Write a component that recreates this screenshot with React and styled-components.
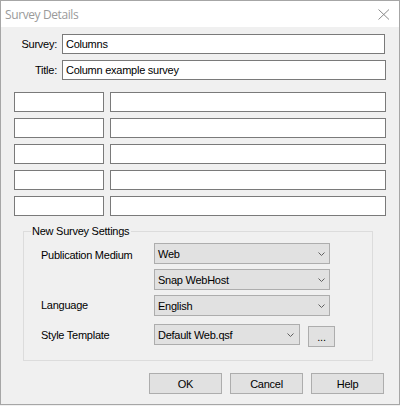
import React from "react";
import styled, { createGlobalStyle } from "styled-components";

const Global = createGlobalStyle`
  html, body { margin: 0; padding: 0; background: #f0f0f0; }
  *, *::before, *::after { box-sizing: border-box; }
`;

const uiFont = `
  font-family: "Liberation Sans", Arial, sans-serif;
  font-size: 11px;
  letter-spacing: -0.25px;
  color: #000;
`;

const Window = styled.div`
  width: 400px;
  height: 405px;
  border: 1px solid #a6a6a6;
  background: #f0f0f0;
  display: flex;
  flex-direction: column;
  ${uiFont}
`;

const TitleBar = styled.div`
  flex: none;
  height: 26px;
  background: #ffffff;
  display: flex;
  align-items: center;
  justify-content: space-between;
  padding: 0 9px 0 4px;
`;

const TitleText = styled.span`
  font-family: "Open Sans", "Noto Sans", sans-serif;
  font-size: 12px;
  letter-spacing: -0.4px;
  color: #9a9a9a;
`;

const Body = styled.div`
  display: flex;
  flex-direction: column;
  align-items: flex-start;
  padding-top: 7px;
`;

const HeaderGrid = styled.div`
  display: grid;
  grid-template-columns: 56px auto;
  column-gap: 5px;
  row-gap: 6px;
  align-items: center;
`;

const FieldLabel = styled.label`
  text-align: right;
  white-space: nowrap;
`;

const TextField = styled.input`
  ${uiFont}
  width: ${(p) => p.$w}px;
  height: 20px;
  margin: 0;
  padding: 0 3px;
  border: 1px solid #7a7a7a;
  border-radius: 0;
  background: #ffffff;
  outline: none;
`;

const ColumnGrid = styled.div`
  margin: 12px 0 0 13px;
  display: grid;
  grid-template-columns: 90px 276px;
  gap: 6px;
`;

const Group = styled.div`
  margin: 15px 0 0 22px;
  width: 350px;
  height: 130px;
  border: 1px solid #dcdcdc;
`;

const Legend = styled.div`
  width: fit-content;
  margin: -7px 0 0 7px;
  padding: 0 2px 0 1px;
  line-height: 13px;
  background: #f0f0f0;
`;

const SettingsList = styled.div`
  margin: 5px 0 0 17px;
  display: flex;
  flex-direction: column;
`;

const SettingRow = styled.div`
  display: grid;
  grid-template-columns: 113px auto;
  align-items: center;
  margin-top: ${(p) => p.$mt || 0}px;
`;

const SettingLabel = styled.span`
  white-space: nowrap;
  padding-top: ${(p) => (p.$dy > 0 ? p.$dy * 2 : 0)}px;
  padding-bottom: ${(p) => (p.$dy < 0 ? -p.$dy * 2 : 0)}px;
`;

const ComboCluster = styled.div`
  display: flex;
  align-items: flex-start;
  gap: 8px;
`;

const Combo = styled.div`
  width: ${(p) => p.$w}px;
  height: 21px;
  border: 1px solid #adadad;
  background: #e1e1e1;
  display: flex;
  align-items: center;
  justify-content: space-between;
  padding: 0 ${(p) => p.$pr || 4}px 0 3px;
`;

const ComboText = styled.span`
  white-space: nowrap;
`;

const PushButton = styled.button`
  ${uiFont}
  width: ${(p) => p.$w}px;
  height: 21px;
  margin: ${(p) => p.$mt || 0}px 0 0 0;
  padding: 0;
  border: 1px solid #adadad;
  border-radius: 0;
  background: #e1e1e1;
  text-align: center;
`;

const ButtonBar = styled.div`
  align-self: stretch;
  margin: 12px 15px 0 0;
  display: flex;
  justify-content: flex-end;
  gap: 8px;
`;

const Chevron = () => (
  <svg width="7" height="4" viewBox="0 0 7 4" style={{ display: "block" }}>
    <polyline points="0.5,0.5 3.5,3.5 6.5,0.5" fill="none" stroke="#606060" strokeWidth="1" />
  </svg>
);

const CloseIcon = () => (
  <svg width="12" height="11" viewBox="0 0 12 11" style={{ display: "block" }}>
    <line x1="0.5" y1="0.5" x2="11" y2="10.5" stroke="#8a8a8a" strokeWidth="1" />
    <line x1="11" y1="0.5" x2="0.5" y2="10.5" stroke="#8a8a8a" strokeWidth="1" />
  </svg>
);

const columnRows = [0, 1, 2, 3, 4];

export default function App() {
  return (
    <>
      <Global />
      <Window>
        <TitleBar>
          <TitleText>Survey Details</TitleText>
          <CloseIcon />
        </TitleBar>
        <Body>
          <HeaderGrid>
            <FieldLabel>Survey:</FieldLabel>
            <TextField $w={323} defaultValue="Columns" readOnly />
            <FieldLabel>Title:</FieldLabel>
            <TextField $w={324} defaultValue="Column example survey" readOnly />
          </HeaderGrid>

          <ColumnGrid>
            {columnRows.map((i) => (
              <React.Fragment key={i}>
                <TextField $w={90} defaultValue="" readOnly />
                <TextField $w={276} defaultValue="" readOnly />
              </React.Fragment>
            ))}
          </ColumnGrid>

          <Group>
            <Legend>New Survey Settings</Legend>
            <SettingsList>
              <SettingRow>
                <SettingLabel $dy={1}>Publication Medium</SettingLabel>
                <Combo $w={176}>
                  <ComboText>Web</ComboText>
                  <Chevron />
                </Combo>
              </SettingRow>
              <SettingRow $mt={5}>
                <span />
                <Combo $w={176}>
                  <ComboText>Snap WebHost</ComboText>
                  <Chevron />
                </Combo>
              </SettingRow>
              <SettingRow $mt={5}>
                <SettingLabel $dy={-1}>Language</SettingLabel>
                <Combo $w={176}>
                  <ComboText>English</ComboText>
                  <Chevron />
                </Combo>
              </SettingRow>
              <SettingRow $mt={8}>
                <SettingLabel $dy={-1}>Style Template</SettingLabel>
                <ComboCluster>
                  <Combo $w={146} $pr={5}>
                    <ComboText>Default Web.qsf</ComboText>
                    <Chevron />
                  </Combo>
                  <PushButton $w={27} $mt={2}>...</PushButton>
                </ComboCluster>
              </SettingRow>
            </SettingsList>
          </Group>

          <ButtonBar>
            <PushButton $w={73}>OK</PushButton>
            <PushButton $w={73}>Cancel</PushButton>
            <PushButton $w={73}>Help</PushButton>
          </ButtonBar>
        </Body>
      </Window>
    </>
  );
}
